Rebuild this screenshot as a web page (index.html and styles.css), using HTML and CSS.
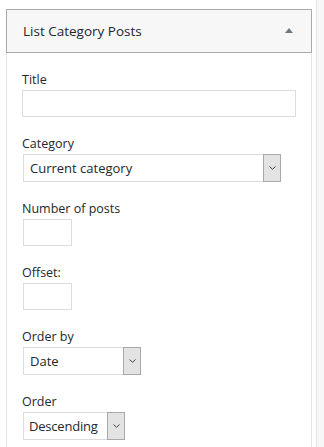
FILE: index.html
```html
<!DOCTYPE html>
<html lang="en">
<head>
	<meta charset="UTF-8">
	<title>List Category Posts widget</title>
	<link rel="stylesheet" href="styles.css">
</head>
<body>
<div class="page">
	<div class="widget">
		<div class="widget-top">
			<h3 class="widget-title">List Category Posts</h3>
			<span class="widget-toggle"></span>
		</div>
		<div class="widget-inside">
			<p class="field">
				<label for="lcp-title">Title</label>
				<input class="text wide" id="lcp-title" type="text">
			</p>
			<p class="field">
				<label for="lcp-cat">Category</label>
				<span class="select select-cat">
					<select id="lcp-cat"><option>Current category</option></select>
					<span class="arrow"><svg width="7" height="4" viewBox="0 0 7 4"><path d="M0.5 0.5 L3.5 3.3 L6.5 0.5" fill="none" stroke="#444" stroke-width="1"/></svg></span>
				</span>
			</p>
			<p class="field">
				<label for="lcp-num">Number of posts</label>
				<input class="text small" id="lcp-num" type="text">
			</p>
			<p class="field">
				<label for="lcp-offset">Offset:</label>
				<input class="text small" id="lcp-offset" type="text">
			</p>
			<p class="field">
				<label for="lcp-orderby">Order by</label>
				<span class="select select-orderby">
					<select id="lcp-orderby"><option>Date</option></select>
					<span class="arrow"><svg width="7" height="4" viewBox="0 0 7 4"><path d="M0.5 0.5 L3.5 3.3 L6.5 0.5" fill="none" stroke="#444" stroke-width="1"/></svg></span>
				</span>
			</p>
			<p class="field">
				<label for="lcp-order">Order</label>
				<span class="select select-order">
					<select id="lcp-order"><option>Descending</option></select>
					<span class="arrow"><svg width="7" height="4" viewBox="0 0 7 4"><path d="M0.5 0.5 L3.5 3.3 L6.5 0.5" fill="none" stroke="#444" stroke-width="1"/></svg></span>
				</span>
			</p>
		</div>
	</div>
	<div class="scroll-edge"></div>
</div>
</body>
</html>
```

FILE: styles.css
```css
body {
	margin: 0;
	background: #fff;
	font-family: "Open Sans", "Noto Sans", sans-serif;
	color: #32373c;
}

.page {
	display: flex;
	align-items: flex-start;
	height: 447px;
	overflow: hidden;
}

.widget {
	width: 306px;
	margin: 9px 0 0 6px;
	box-sizing: border-box;
	border: 1px solid #e5e5e5;
	border-top: none;
}

.widget-top {
	display: flex;
	align-items: center;
	justify-content: space-between;
	height: 44px;
	margin: 0 -1px;
	padding: 0 18px 0 16px;
	box-sizing: border-box;
	background: #f7f7f7;
	border: 1px solid #a9a9a9;
}

.widget-title {
	margin: 0;
	font-size: 13.5px;
	font-weight: normal;
	color: #23282d;
}

.widget-toggle {
	width: 0;
	height: 0;
	border-left: 4px solid transparent;
	border-right: 4px solid transparent;
	border-bottom: 5px solid #72777c;
	margin-top: -2px;
}

.widget-inside {
	padding: 18px 15px 0 15px;
}

.field {
	margin: 0 0 18px 0;
}

.field label {
	display: block;
	font-size: 12.5px;
	line-height: 18px;
	color: #23282d;
	margin-bottom: 1px;
}

.text {
	display: block;
	height: 27px;
	box-sizing: border-box;
	border: 1px solid #dcdcdc;
	background: #fff;
	margin: 0;
}

.text.wide {
	width: 274px;
}

.text.small {
	width: 49px;
	margin-left: 1px;
}

.select {
	display: flex;
	height: 28px;
	margin-left: 1px;
	box-sizing: border-box;
	border: 1px solid #dcdcdc;
	background: #fff;
}

.select select {
	flex: 1;
	min-width: 0;
	appearance: none;
	-webkit-appearance: none;
	border: none;
	outline: none;
	background: transparent;
	padding: 0 0 0 6px;
	font-family: "Open Sans", "Noto Sans", sans-serif;
	font-size: 13px;
	color: #23282d;
}

.select .arrow {
	display: flex;
	align-items: center;
	justify-content: center;
	width: 18px;
	margin: -1px -1px -1px 0;
	box-sizing: border-box;
	background: #e3e3e3;
	border: 1px solid #a8a8a8;
}

.select-cat {
	width: 258px;
}

.select-orderby {
	width: 118px;
}

.select-order {
	width: 102px;
}

.select-order select {
	padding-left: 5px;
	letter-spacing: -0.2px;
}

.scroll-edge {
	width: 8px;
	height: 447px;
	margin-left: 4px;
	background: #f7f7f7;
	border-left: 1px solid #e5e5e5;
}
```
